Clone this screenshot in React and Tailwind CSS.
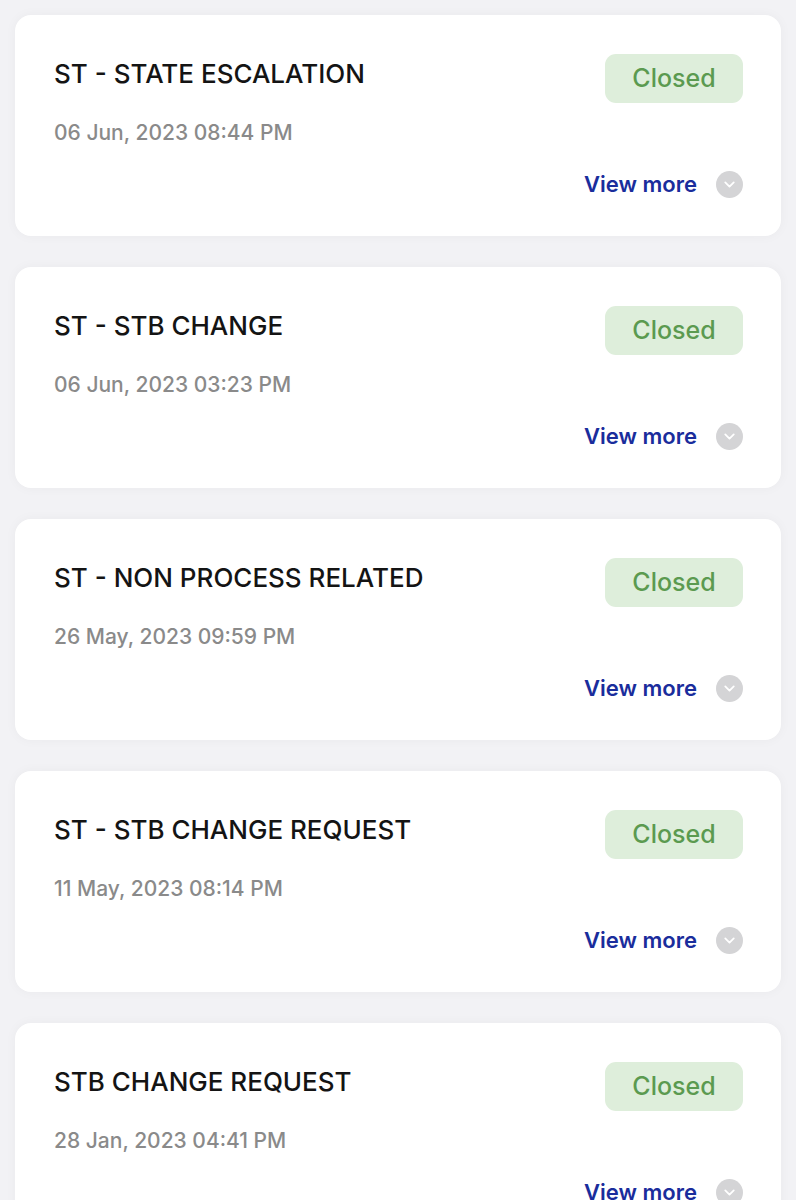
import { ChevronDown } from 'lucide-react'

const tickets = [
  { titulo: 'ST - STATE ESCALATION', fecha: '06 Jun, 2023 08:44 PM' },
  { titulo: 'ST - STB CHANGE', fecha: '06 Jun, 2023 03:23 PM' },
  { titulo: 'ST - NON PROCESS RELATED', fecha: '26 May, 2023 09:59 PM' },
  { titulo: 'ST - STB CHANGE REQUEST', fecha: '11 May, 2023 08:14 PM' },
  { titulo: 'STB CHANGE REQUEST', fecha: '28 Jan, 2023 04:41 PM' },
]

function Ticket({ titulo, fecha }) {
  return (
    <div className="bg-white rounded-[16px] shadow-[0_0_12px_rgba(0,0,0,0.04)] pt-[39px] pb-[38px] pl-[39px] pr-[38px]">
      {/* Cabecera */}
      <div className="flex justify-between items-start">
        <div className="mt-[6px] flex flex-col gap-[30px]">
          <p className="text-[26px] leading-[28px] font-medium text-[#141414]">{titulo}</p>
          <p className="text-[21px] leading-[28px] font-medium text-[#8a8a8a] translate-y-[1px]">{fecha}</p>
        </div>
        <span className="h-[49px] w-[138px] rounded-[11px] bg-[#deeedb] text-[#5b9a50] text-[25px] font-medium flex items-center justify-center">
          Closed
        </span>
      </div>

      {/* Ver más */}
      <div className="mt-[24px] flex justify-end items-center gap-[19px]">
        <span className="text-[22px] leading-[28px] font-semibold text-[#1a2d9c]">View more</span>
        <span className="w-[27px] h-[27px] rounded-full bg-[#d4d4d6] flex items-center justify-center">
          <ChevronDown size={17} color="#ffffff" strokeWidth={2.5} />
        </span>
      </div>
    </div>
  )
}

export default function App() {
  return (
    <div
      className="min-h-[1200px] bg-[#f2f2f5] px-[15px] pt-[15px] pb-[15px] flex flex-col gap-[31px]"
      style={{ fontFamily: 'Inter, "Liberation Sans", Arial, sans-serif' }}
    >
      {tickets.map((t) => (
        <Ticket key={t.titulo + t.fecha} {...t} />
      ))}
    </div>
  )
}
